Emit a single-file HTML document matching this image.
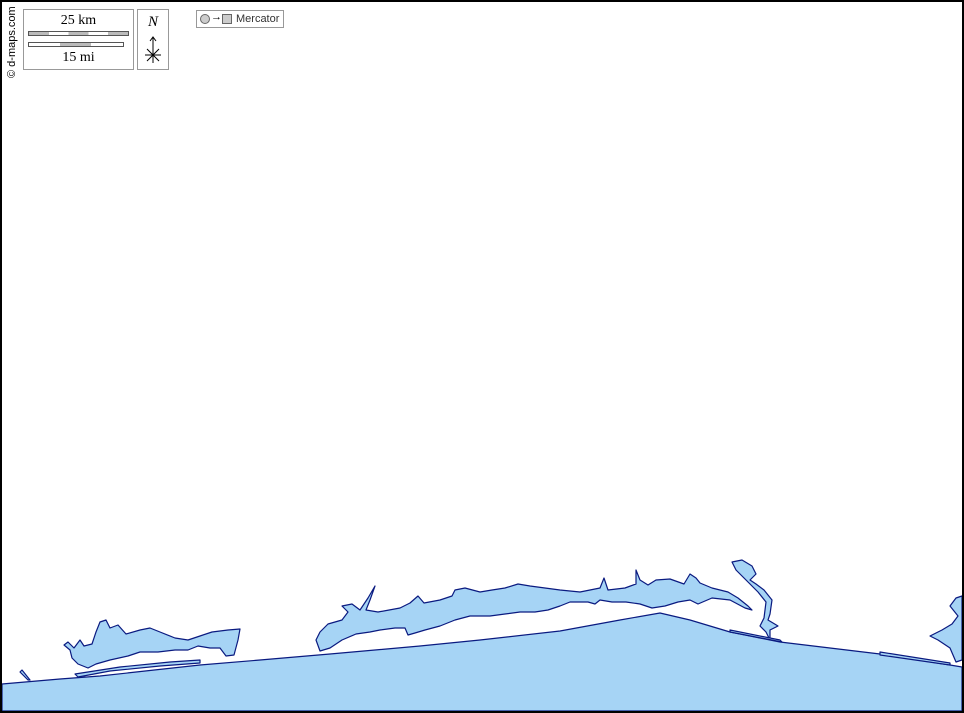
<!DOCTYPE html>
<html><head><meta charset="utf-8"><style>
html,body{margin:0;padding:0;background:#fff;}
body{width:964px;height:713px;position:relative;overflow:hidden;font-family:"Liberation Sans",sans-serif;}
.frame{position:absolute;left:0;top:0;width:960px;height:709px;border:2px solid #000;}
.copy{position:absolute;left:-23px;top:37px;transform:rotate(-90deg);font-size:11px;color:#000;width:70px;white-space:nowrap;}
.box{position:absolute;border:1px solid #999;background:#fff;}
</style></head><body>
<svg width="964" height="713" style="position:absolute;left:0;top:0" viewBox="0 0 964 713">
<g fill="#a6d4f5" stroke="#0a1a80" stroke-width="1.2" stroke-linejoin="round">
<path d="M2,684 L60,679 L100,676 L200,665 L260,660 L330,654 L420,646 L480,640 L560,631 L620,620 L660,613 L690,620 L730,632 L780,642 L880,654 L950,665 L962,667 L962,711 L2,711 Z"/>
<path d="M70,650 L64,645 L68,642 L74,648 L80,640 L84,646 L92,644 L96,632 L100,622 L106,620 L110,628 L118,625 L126,634 L140,630 L150,628 L160,632 L175,638 L188,640 L200,636 L212,632 L228,630 L240,629 L238,640 L234,655 L226,656 L220,648 L210,648 L198,646 L188,650 L175,650 L158,652 L150,652 L140,652 L128,656 L110,660 L96,664 L88,668 L78,664 L72,658 Z"/>
<path d="M75,674 L120,667 L170,662 L200,660 L200,663 L160,666 L110,671 L78,677 Z"/>
<path d="M320,632 L328,624 L342,620 L348,612 L342,606 L352,604 L360,610 L368,598 L375,586 L370,600 L366,610 L378,612 L400,608 L410,603 L418,596 L424,603 L440,600 L452,596 L455,590 L465,588 L480,592 L492,590 L505,588 L518,584 L530,586 L545,588 L560,590 L580,592 L600,588 L604,578 L608,590 L625,588 L636,584 L636,570 L640,580 L648,585 L656,580 L670,579 L684,584 L690,574 L696,578 L700,583 L712,588 L728,592 L738,598 L748,606 L752,610 L745,608 L730,600 L712,598 L698,604 L690,600 L678,602 L665,606 L652,608 L640,604 L626,602 L612,602 L600,600 L595,604 L588,602 L570,602 L560,606 L548,610 L535,612 L520,612 L505,614 L490,616 L470,616 L455,620 L440,626 L425,630 L415,633 L408,635 L405,628 L395,628 L380,630 L370,632 L356,634 L342,640 L330,648 L320,651 L316,640 Z"/>
<path d="M732,562 L742,560 L752,566 L756,574 L750,580 L756,584 L764,590 L772,600 L770,614 L768,620 L778,626 L770,630 L770,640 L766,632 L760,626 L764,618 L766,602 L758,592 L750,584 L742,576 L736,570 Z"/>
<path d="M950,606 L956,598 L962,596 L962,660 L956,662 L950,648 L938,640 L930,636 L942,630 L952,624 L958,616 Z"/>
<path d="M730,630 L780,640 L782,642 L730,632 Z"/>
<path d="M880,652 L950,663 L950,665 L880,655 Z"/>
<path d="M22,670 L30,680 L28,680 L20,672 Z"/>
</g>
</svg>
<div class="frame"></div>
<div class="copy">© d-maps.com</div>
<div class="box" style="left:23px;top:9px;width:109px;height:59px;">
 <div style="position:absolute;left:0;width:109px;top:3px;text-align:center;font-family:'Liberation Serif',serif;font-size:14px;">25 km</div>
 <div style="position:absolute;left:4px;top:21px;width:99px;height:3px;border:1px solid #555;background:linear-gradient(90deg,#bbb 0 20%,#fff 20% 40%,#bbb 40% 60%,#fff 60% 80%,#bbb 80%);"></div>
 <div style="position:absolute;left:4px;top:32px;width:94px;height:3px;border:1px solid #555;background:linear-gradient(90deg,#fff 0 33%,#bbb 33% 66%,#fff 66%);"></div>
 <div style="position:absolute;left:0;width:109px;top:40px;text-align:center;font-family:'Liberation Serif',serif;font-size:14px;">15 mi</div>
</div>
<div class="box" style="left:137px;top:9px;width:30px;height:59px;">
 <div style="position:absolute;left:0;width:30px;top:4px;text-align:center;font-family:'Liberation Serif',serif;font-style:italic;font-size:15px;">N</div>
 <svg width="30" height="40" style="position:absolute;left:0;top:22px" viewBox="0 0 30 40"><g stroke="#000" stroke-width="1" fill="none"><path d="M15,5 V31 M12,9 L15,5 L18,9 M7,23 H23 M9,17 L21,29 M21,17 L9,29"/></g></svg>
</div>
<div class="box" style="left:196px;top:10px;width:86px;height:16px;font-size:11px;">
 <span style="position:absolute;left:3px;top:3px;width:8px;height:8px;border:1px solid #666;border-radius:50%;background:#ccc;"></span>
 <span style="position:absolute;left:14px;top:0px;font-size:11px;">→</span>
 <span style="position:absolute;left:25px;top:3px;width:8px;height:8px;border:1px solid #666;background:#ccc;"></span>
 <span style="position:absolute;left:39px;top:2px;color:#333;">Mercator</span>
</div>
</body></html>
